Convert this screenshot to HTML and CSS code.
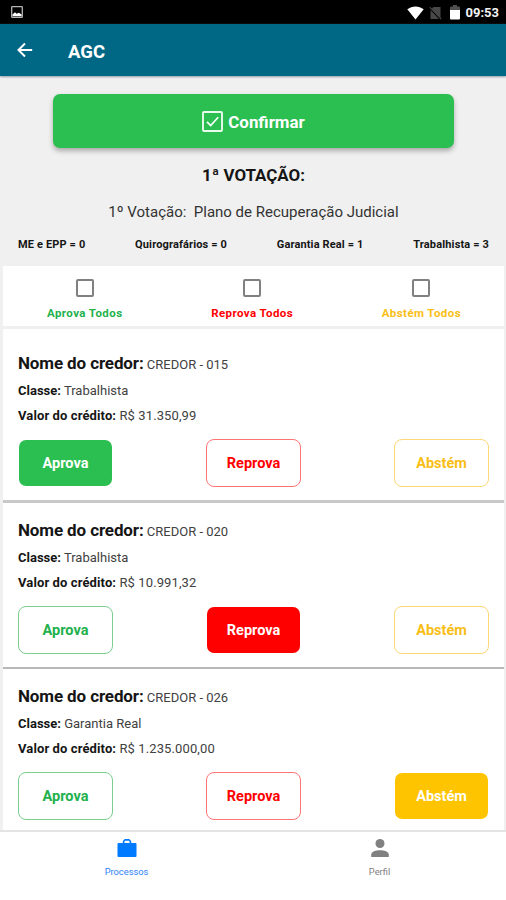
FILE: index.html
```html
<!DOCTYPE html>
<html lang="pt-BR">
<head>
<meta charset="utf-8">
<meta name="viewport" content="width=device-width, initial-scale=1">
<title>AGC</title>
<link rel="stylesheet" href="styles.css">
</head>
<body>
<div class="statusbar">
  <svg class="st-img" width="12" height="12" viewBox="0 0 12 12"><rect x=".7" y=".7" width="10.6" height="10.6" rx=".6" fill="none" stroke="#b5b5b5" stroke-width="1.3"/><path d="M1.500 10.300V8.500L4 6.300l1.600 1.500L8 6.800l2.600 1.700v1.800z" fill="#fff"/></svg>
  <div class="st-right">
    <svg class="st-wifi" width="17" height="14" viewBox="0 0 17 14"><path d="M.3 3.3C5-.6 12-.6 16.700 3.300L8.500 13.600z" fill="#fff"/></svg>
    <svg class="st-sim" width="13" height="14" viewBox="0 0 13 14"><path d="M4.500 1H11.500V12L2.500 3zM1.500 4 10 13H1.500z" fill="#484848"/><path d="M.7 1.200 12.300 13.200" stroke="#484848" stroke-width="1.100"/></svg>
    <svg class="st-bat" width="10" height="15" viewBox="0 0 10 15"><path d="M0 2.500Q0 1.500 1 1.500H3V0H7V1.500H9Q10 1.500 10 2.500V5H0z" fill="#505050"/><path d="M0 5H10V13.500Q10 14.500 9 14.500H1Q0 14.500 0 13.500z" fill="#fff"/></svg>
    <span class="clock">09:53</span>
  </div>
</div>
<header class="appbar">
  <svg width="16" height="16" viewBox="0 0 16 16"><path d="M15.200 8H1.800M8 1.500 1.500 8 8 14.500" fill="none" stroke="#fff" stroke-width="2"/></svg>
  <h1>AGC</h1>
</header>
<main>
  <button class="confirm">
    <svg width="21" height="21" viewBox="0 0 21 21"><rect x="1" y="1" width="19" height="19" rx="1" fill="none" stroke="#e9fbed" stroke-width="1.900"/><path d="m5 10.800 3.700 3.700 7.500-8.200" fill="none" stroke="#fff" stroke-width="1.700"/></svg>
    <span>Confirmar</span>
  </button>
  <h2>1ª VOTAÇÃO:</h2>
  <p class="subject">1º Votação:&nbsp; Plano de Recuperação Judicial</p>
  <div class="counts"><span>ME e EPP = 0</span><span>Quirografários = 0</span><span>Garantia Real = 1</span><span>Trabalhista = 3</span></div>
  <div class="all">
    <label class="green"><i></i><span>Aprova Todos</span></label>
    <label class="red"><i></i><span>Reprova Todos</span></label>
    <label class="yellow"><i></i><span>Abstém Todos</span></label>
  </div>
  <div class="list">
    <section class="card">
      <p class="name"><b>Nome do credor:</b> <span>CREDOR - 015</span></p>
      <p class="class"><b>Classe:</b> <span>Trabalhista</span></p>
      <p class="value"><b>Valor do crédito:</b> <span>R$ 31.350,99</span></p>
      <div class="votes"><button class="green on">Aprova</button><button class="red">Reprova</button><button class="yellow">Abstém</button></div>
    </section>
    <section class="card">
      <p class="name"><b>Nome do credor:</b> <span>CREDOR - 020</span></p>
      <p class="class"><b>Classe:</b> <span>Trabalhista</span></p>
      <p class="value"><b>Valor do crédito:</b> <span>R$ 10.991,32</span></p>
      <div class="votes"><button class="green">Aprova</button><button class="red on">Reprova</button><button class="yellow">Abstém</button></div>
    </section>
    <section class="card">
      <p class="name"><b>Nome do credor:</b> <span>CREDOR - 026</span></p>
      <p class="class"><b>Classe:</b> <span>Garantia Real</span></p>
      <p class="value"><b>Valor do crédito:</b> <span>R$ 1.235.000,00</span></p>
      <div class="votes"><button class="green">Aprova</button><button class="red">Reprova</button><button class="yellow on">Abstém</button></div>
    </section>
  </div>
</main>
<nav>
  <a class="tab active">
    <svg width="20" height="20" viewBox="0 0 20 20"><path d="M1.500 5H5.800V3L7.800 1H12.200L14.200 3V5H18.500Q19.500 5 19.500 6V18Q19.500 19 18.500 19H1.500Q.5 19 .5 18V6Q.5 5 1.500 5zM7.500 5H12.500V3.300L12 2.800H8L7.500 3.300z" fill="#007aff" fill-rule="evenodd"/></svg>
    <span>Processos</span>
  </a>
  <a class="tab">
    <svg width="20" height="20" viewBox="0 0 20 20"><circle cx="10" cy="5.500" r="4.500" fill="#808080"/><path d="M1.200 19V16.600C1.200 10.700 18.800 10.700 18.800 16.600V19z" fill="#808080"/></svg>
    <span>Perfil</span>
  </a>
</nav>
</body>
</html>
```
FILE: styles.css
```css
* { box-sizing: border-box; }
body {
  margin: 0;
  height: 900px;
  display: flex;
  flex-direction: column;
  overflow: hidden;
  background: #f0f0f0;
  color: #151515;
  font-family: Roboto, "Liberation Sans", sans-serif;
}
h1, h2, p { margin: 0; }
button { font-family: inherit; padding: 0; }
svg { display: block; flex: none; }

.statusbar {
  height: 24px;
  flex: none;
  background: #000;
  display: flex;
  align-items: center;
  justify-content: space-between;
  padding: 1px 7px 0 11px;
}
.st-img { margin-top: -2px; }
.st-right { display: flex; align-items: center; }
.st-sim { margin-left: 5px; }
.st-bat { margin-left: 8px; }
.clock {
  margin-left: 6px;
  color: #f2f2f2;
  font-size: 13px;
  font-weight: 700;
  line-height: 20px;
}
.appbar {
  height: 52px;
  flex: none;
  background: #006885;
  display: flex;
  align-items: center;
  padding: 0 17px;
  box-shadow: 0 1px 2px #8f9dab;
  color: #fff;
}
.appbar h1 {
  margin: 3px 0 0 35px;
  font-size: 18.5px;
  font-weight: 700;
}

main {
  height: 754px;
  display: flex;
  flex-direction: column;
  padding: 18px 2px 0 3px;
}
.confirm {
  width: 401px;
  height: 54px;
  flex: none;
  margin-left: 50px;
  border: 0;
  border-radius: 7px;
  background: #2abf50;
  box-shadow: 0 3px 5px #aaa;
  color: #fff;
  font-size: 16.9px;
  font-weight: 700;
  display: flex;
  align-items: center;
  justify-content: center;
  gap: 5px;
}
.confirm span { padding-top: 1px; }
h2 {
  margin-top: 15px;
  font-size: 16.9px;
  line-height: 24px;
  text-align: center;
}
.subject {
  margin-top: 13px;
  font-size: 15px;
  line-height: 24px;
  text-align: center;
  white-space: nowrap;
  color: #333;
}
.counts {
  display: flex;
  justify-content: space-between;
  margin: 12px 15px 0 15px;
  font-size: 11px;
  letter-spacing: .14px;
  font-weight: 700;
  line-height: 18px;
  white-space: nowrap;
}
.all {
  height: 60px;
  flex: none;
  margin-top: 12px;
  background: #fff;
  display: flex;
  justify-content: space-between;
  padding: 13px 43px 0 44px;
  font-size: 11.5px;
  letter-spacing: .42px;
  font-weight: 700;
}
.all label {
  display: flex;
  flex-direction: column;
  align-items: center;
  white-space: nowrap;
}
.all i {
  width: 18px;
  height: 18px;
  border: 2px solid #808080;
  border-radius: 2px;
}
.all span { line-height: 16px; margin-top: 8px; }
.green { color: #22b14c; }
.red { color: #f00; }
.yellow { color: #f9be16; }

.list { margin-top: 3px; }
.card {
  height: 166.4px;
  background: #fff;
  padding: 15px 15px 0;
  white-space: nowrap;
  font-size: 13px;
  border-bottom: 2px solid #b8b8b8;
}
.card:first-child {
  height: 173.5px;
  padding-top: 22px;
  border-bottom: 3px solid #c8c8c8;
}
.card:last-child { border-bottom: 0; height: 161px; }
.card span { color: #414141; }
.name { line-height: 24px; }
.name b { font-size: 17px; letter-spacing: -.12px; }
.class { line-height: 20px; margin-top: 4px; }
.value { line-height: 20px; margin-top: 5px; letter-spacing: .11px; }
.votes {
  display: flex;
  justify-content: space-between;
  margin-top: 13px;
}
.votes button {
  width: 95px;
  height: 48px;
  padding-top: 1px;
  border: 1px solid;
  border-radius: 8px;
  background: #fff;
  font-size: 14.5px;
  font-weight: 700;
}
.votes .green { border-color: #7bce8f; }
.votes .red { border-color: #ff7474; }
.votes .yellow { border-color: #fbd778; }
.votes .on { color: #fff; border-color: transparent; background-clip: padding-box; }
.votes .green.on { background-color: #2abf50; }
.votes .red.on { background-color: #f00; }
.votes .yellow.on { background-color: #ffc400; }

nav {
  height: 70px;
  flex: none;
  position: relative;
  background: #fff;
  border-top: 2px solid #e4e4e4;
  display: flex;
}
.tab {
  flex: 1;
  display: flex;
  flex-direction: column;
  align-items: center;
  padding-top: 6px;
  font-size: 9.3px;
  color: #808080;
}
.tab span { line-height: 14px; margin-top: 7px; }
.active { color: #2f82f5; }
```
